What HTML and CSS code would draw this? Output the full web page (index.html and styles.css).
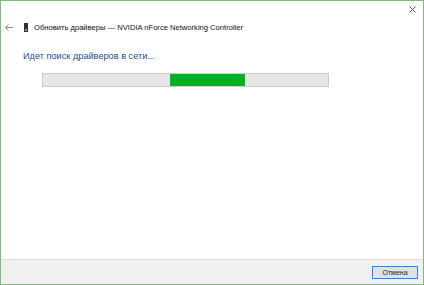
FILE: index.html
```html
<!DOCTYPE html>
<html lang="ru">
<head>
  <meta charset="UTF-8" />
  <title>Обновить драйверы</title>
  <link rel="stylesheet" href="styles.css">
</head>
<body>
  <div class="window">
    <div class="topbar">
      <span class="close">
        <svg width="7" height="7" viewBox="0 0 7 7"><path d="M0.5 0.5L6.5 6.5M6.5 0.5L0.5 6.5" stroke="#555" stroke-width="1"/></svg>
      </span>
    </div>
    <div class="titlerow">
      <svg class="back" width="8" height="7" viewBox="0 0 8 7"><path d="M0.5 3.5H8M3.5 0.5L0.5 3.5L3.5 6.5" stroke="#888" stroke-width="1" fill="none"/></svg>
      <svg class="device" width="4" height="9" viewBox="0 0 4 9"><rect x="0" y="0" width="4" height="9" fill="#333"/><rect x="1" y="6" width="2" height="2" fill="#6a9"/></svg>
      <span class="title">Обновить драйверы — NVIDIA nForce Networking Controller</span>
    </div>
    <div class="content">
      <h2>Идет поиск драйверов в сети...</h2>
      <div class="progress">
        <div class="bar"></div>
      </div>
    </div>
    <div class="footer">
      <button>Отмена</button>
    </div>
  </div>
</body>
</html>
```
FILE: styles.css
```css
body {
  margin: 0;
  padding: 0;
  font-family: "Liberation Sans", Arial, sans-serif;
  background: #ffffff;
}
.window {
  width: 424px;
  height: 285px;
  box-sizing: border-box;
  border: 1px solid #86b980;
  display: flex;
  flex-direction: column;
  background: #ffffff;
}
.topbar {
  height: 17px;
  display: flex;
  justify-content: flex-end;
  align-items: center;
  padding-right: 7px;
}
.close {
  display: flex;
}
.titlerow {
  display: flex;
  align-items: center;
  height: 18px;
  padding-left: 4px;
}
.back {
  margin-right: 11px;
}
.device {
  margin-right: 6px;
}
.title {
  font-size: 7.6px;
  color: #111;
}
.content {
  flex: 1;
  padding-left: 22px;
}
h2 {
  font-weight: normal;
  font-size: 9.2px;
  line-height: 11px;
  color: #1f4c9a;
  margin: 15px 0 11px 0;
}
.progress {
  width: 287px;
  height: 14px;
  margin-left: 19px;
  box-sizing: border-box;
  border: 1px solid #cfcfcf;
  background: #e6e6e6;
  padding-left: 127px;
}
.bar {
  width: 75px;
  height: 12px;
  background: #06b025;
}
.footer {
  height: 24px;
  border-top: 1px solid #dfdfdf;
  background: #f0f0f0;
  display: flex;
  justify-content: flex-end;
  align-items: center;
  padding-right: 5px;
}
button {
  width: 46px;
  height: 13px;
  font-family: "Liberation Sans", Arial, sans-serif;
  font-size: 7px;
  padding: 0;
  border: 1px solid #3c7fd1;
  background: #e1e1e1;
  color: #222;
}
```
